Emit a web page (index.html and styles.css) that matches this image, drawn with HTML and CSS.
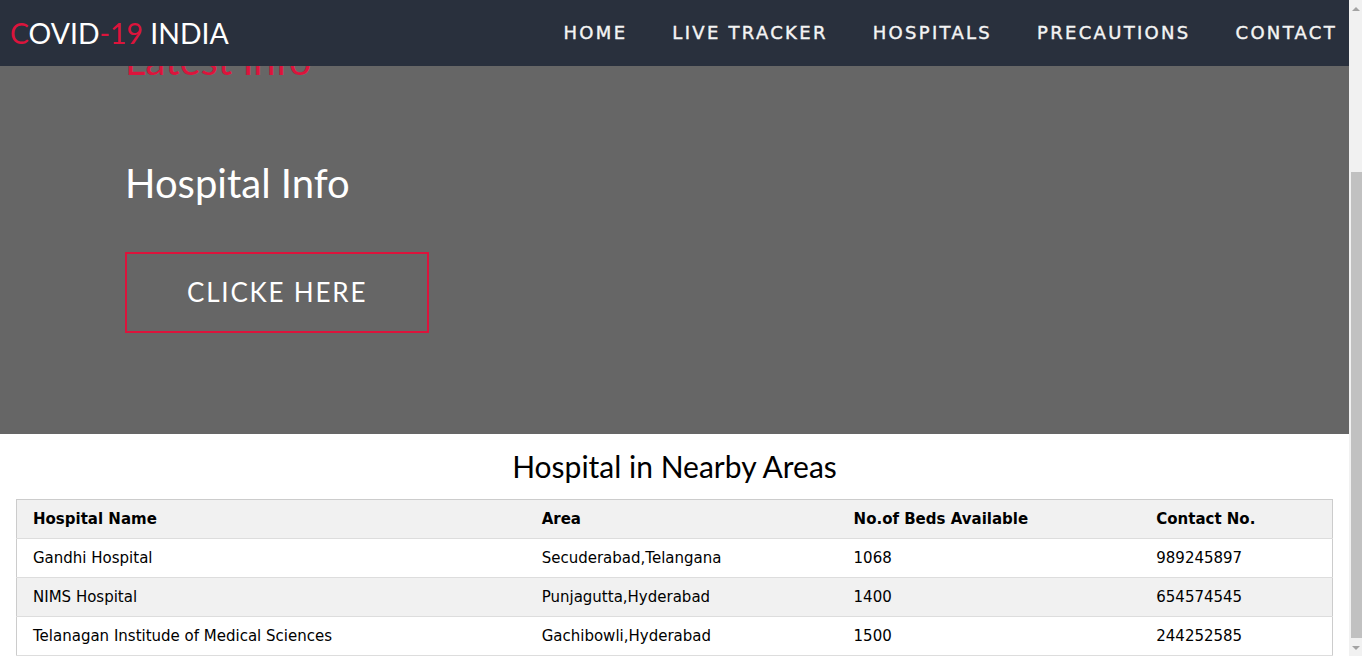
FILE: index.html
```html
<!DOCTYPE html>
<html lang="en">
<head>
<meta charset="utf-8">
<title>COVID-19 INDIA</title>
<link rel="stylesheet" href="styles.css">
</head>
<body>
<header class="topbar">
  <div class="logo"><span class="red">C</span>OVID<span class="red">-19</span> INDIA</div>
  <nav>
    <ul class="menu">
      <li><a href="#">HOME</a></li>
      <li><a href="#">LIVE TRACKER</a></li>
      <li><a href="#">HOSPITALS</a></li>
      <li><a href="#">PRECAUTIONS</a></li>
      <li><a href="#">CONTACT</a></li>
    </ul>
  </nav>
</header>

<section class="hero">
  <h1 class="hero-title latest">Latest Info</h1>
  <h1 class="hero-title">Hospital Info</h1>
  <a class="cta" href="#">CLICKE HERE</a>
</section>

<section class="hospitals">
  <h2 class="section-title">Hospital in Nearby Areas</h2>
  <table class="table">
    <thead>
      <tr class="shade">
        <th class="c1">Hospital Name</th>
        <th class="c2">Area</th>
        <th class="c3">No.of Beds Available</th>
        <th class="c4">Contact No.</th>
      </tr>
    </thead>
    <tbody>
      <tr>
        <td>Gandhi Hospital</td>
        <td>Secuderabad,Telangana</td>
        <td>1068</td>
        <td>989245897</td>
      </tr>
      <tr class="shade">
        <td>NIMS Hospital</td>
        <td>Punjagutta,Hyderabad</td>
        <td>1400</td>
        <td>654574545</td>
      </tr>
      <tr>
        <td>Telanagan Institude of Medical Sciences</td>
        <td>Gachibowli,Hyderabad</td>
        <td>1500</td>
        <td>244252585</td>
      </tr>
    </tbody>
  </table>
</section>

<div class="scrollbar" aria-hidden="true">
  <div class="sb-btn"><span class="arrow-up"></span></div>
  <div class="sb-track"><div class="sb-thumb"></div></div>
  <div class="sb-btn"><span class="arrow-down"></span></div>
</div>
<script src="script.js"></script>
</body>
</html>
```

FILE: styles.css
```css
* { box-sizing: border-box; }

html { scroll-behavior: auto; }

body {
  margin: 0;
  padding-right: 13px;
  font-family: "DejaVu Sans", Verdana, sans-serif;
  font-size: 15px;
  color: #000;
  background: #fff;
}

.topbar {
  position: fixed;
  top: 0;
  left: 0;
  right: 13px;
  height: 66px;
  background: #29303d;
  display: flex;
  align-items: center;
  justify-content: space-between;
  padding: 0 12px 0 10px;
  z-index: 10;
}

.logo {
  font-family: Lato, "Open Sans", sans-serif;
  font-size: 28.4px;
  color: #fff;
  line-height: 1;
  padding-top: 1px;
}

.red { color: #dc143c; }

.menu {
  list-style: none;
  margin: 0;
  padding: 0;
  display: flex;
  gap: 45px;
}

.menu a {
  color: #f4f4f4;
  text-decoration: none;
  font-family: "DejaVu Sans", Verdana, sans-serif;
  font-size: 18px;
  letter-spacing: 2.3px;
  line-height: 1;
  -webkit-text-stroke: 0.4px #f4f4f4;
}

.hero {
  min-height: 100vh;
  background: #666;
  display: flex;
  flex-direction: column;
  justify-content: flex-end;
  align-items: flex-start;
  padding: 0 0 101px 125px;
}

.hero-title {
  margin: 0;
  font-family: Lato, "Open Sans", sans-serif;
  font-weight: 400;
  font-size: 40px;
  line-height: 48px;
  color: #fff;
}

.latest {
  color: #dc143c;
  margin-bottom: 75px;
}

.cta {
  margin-top: 45px;
  display: block;
  border: 2px solid #dc143c;
  padding: 20px 60px;
  font-family: Lato, "Open Sans", sans-serif;
  font-size: 26px;
  line-height: 37px;
  letter-spacing: 1.8px;
  color: #fff;
  text-decoration: none;
}

.hospitals {
  padding: 0 16px;
}

.section-title {
  margin: 14px 0 15px;
  text-align: center;
  font-family: Lato, "Open Sans", sans-serif;
  font-weight: 400;
  font-size: 30px;
  line-height: 36px;
}

.table {
  width: 100%;
  border-collapse: collapse;
  border: 1px solid #ccc;
}

.table tr {
  border-bottom: 1px solid #ddd;
}

.table th,
.table td {
  padding: 8px;
  text-align: left;
  line-height: 22px;
  vertical-align: top;
}

.table th:first-child,
.table td:first-child {
  padding-left: 16px;
}

.table th { font-weight: bold; }

.shade { background: #f1f1f1; }

.c1 { width: 39.3%; }
.c2 { width: 23.7%; }
.c3 { width: 23%; }
.c4 { width: 14%; }

/* window scrollbar as seen in the screenshot */
.scrollbar {
  position: fixed;
  top: 0;
  right: 0;
  bottom: 0;
  width: 13px;
  background: #f1f1f1;
  display: flex;
  flex-direction: column;
  z-index: 20;
}

.sb-btn {
  height: 17px;
  display: flex;
  align-items: center;
  justify-content: center;
}

.arrow-up,
.arrow-down {
  width: 0;
  height: 0;
  border-left: 4px solid transparent;
  border-right: 4px solid transparent;
}

.arrow-up { border-bottom: 4px solid #a3a3a3; margin-left: 1px; }
.arrow-down { border-top: 4px solid #a3a3a3; margin-left: 1px; }

.sb-track {
  flex: 1;
  padding-left: 2px;
}

.sb-thumb {
  margin-top: 155px;
  height: 466px;
  background: #c1c1c1;
}
```

FILE: script.js
```js
window.scrollTo(0, document.documentElement.scrollHeight);
window.addEventListener('load', function () {
  window.scrollTo(0, document.documentElement.scrollHeight);
});
```
